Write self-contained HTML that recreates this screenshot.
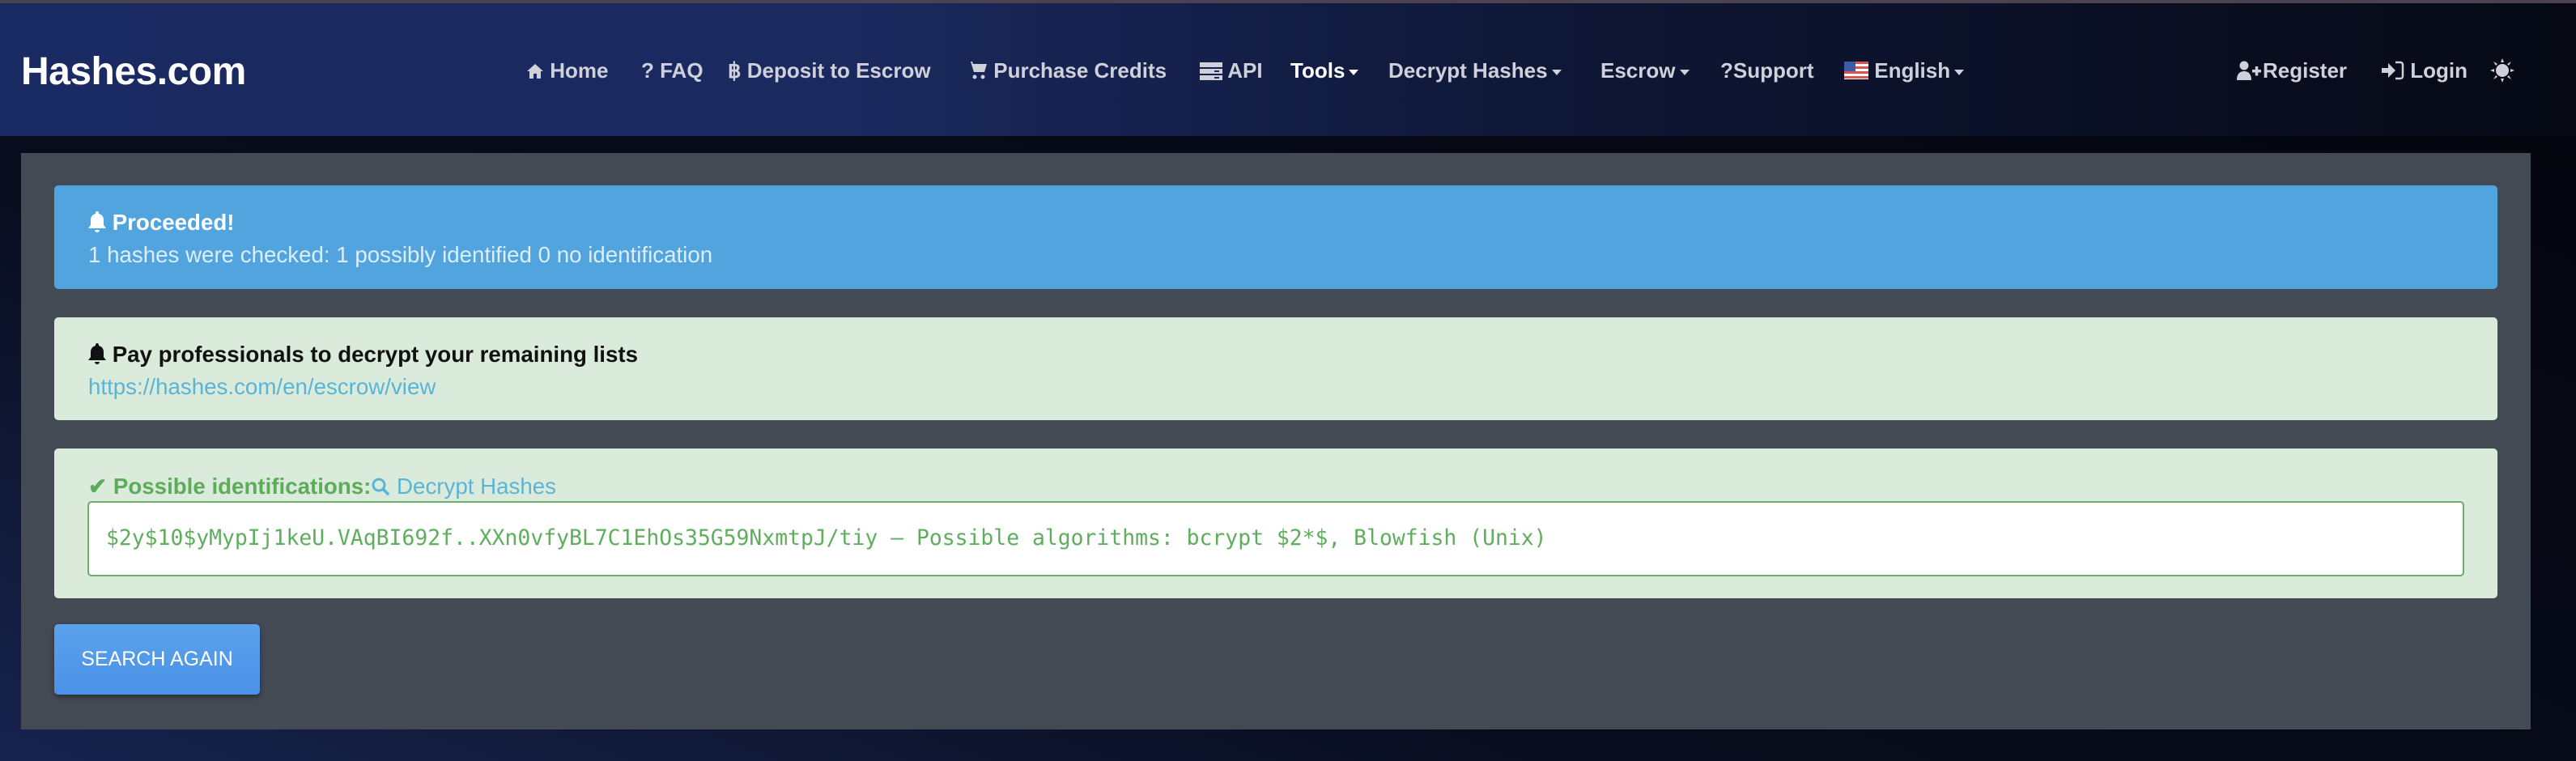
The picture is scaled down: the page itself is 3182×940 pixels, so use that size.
<!DOCTYPE html>
<html><head><meta charset="utf-8">
<style>
*{box-sizing:border-box;margin:0;padding:0}
html,body{width:3182px;height:940px;overflow:hidden}
body{font-family:"Liberation Sans",sans-serif;background:linear-gradient(20deg,#17244f 0%,#080c1c 35%,#04060d 100%);position:relative}
.strip{position:absolute;left:0;top:0;width:3182px;height:4px;background:#4b4352}
.nav{position:absolute;left:0;top:4px;width:3182px;height:164px;background:linear-gradient(90deg,#1a2a62 0%,#1a295e 33%,#0f1736 60%,#060914 100%)}
.logo{position:absolute;left:26px;top:57px;font-size:48px;font-weight:bold;color:#fff;letter-spacing:-0.5px}
.ni{position:absolute;top:68px;font-size:26px;font-weight:bold;color:#cfd0da;white-space:nowrap;line-height:30px}
.ni.w{color:#fff}
.ni svg{vertical-align:-3px;fill:#cfd0da}
.car{display:inline-block;width:0;height:0;border-left:6px solid transparent;border-right:6px solid transparent;border-top:7px solid currentColor;vertical-align:middle;margin-left:5px}
.panel{position:absolute;left:26px;top:189px;width:3100px;height:712px;background:#434a54}
.al{position:absolute;left:41px;width:3018px;border-radius:5px}
.t{position:absolute;left:42px;font-size:27.7px;white-space:nowrap}
.t svg{vertical-align:-3px}
.input{position:absolute;left:41px;top:65px;width:2936px;height:93px;background:#fff;border:2px solid #6ab068;border-radius:5px}
.mono{position:absolute;left:21px;top:28px;font-family:"DejaVu Sans Mono","Liberation Mono",monospace;font-size:26.4px;color:#5fae5d;white-space:nowrap}
.btn{position:absolute;left:41px;top:582px;width:254px;height:87px;border-radius:5px;background:linear-gradient(#5aa2ec,#4b91e8);box-shadow:0 3px 6px rgba(0,0,0,.35);color:#fff;font-size:25px;text-align:center;line-height:87px}
</style></head><body>
<div class="strip"></div>
<div class="nav">
 <div class="logo">Hashes.com</div>
 <div class="ni" style="left:650px"><svg width="22" height="22" viewBox="0 0 22 22"><path d="M11 2 L1 11 L4 11 L4 20 L9 20 L9 14 L13 14 L13 20 L18 20 L18 11 L21 11 Z"/></svg> Home</div>
 <div class="ni" style="left:792px">? FAQ</div>
 <div class="ni" style="left:899px">&#3647; Deposit to Escrow</div>
 <div class="ni" style="left:1194px"><svg width="26" height="24" viewBox="0 0 26 24"><path d="M0 1h5l4 13h13l3-10H8l-1-3z"/><circle cx="10" cy="20" r="2.5"/><circle cx="20" cy="20" r="2.5"/></svg> Purchase Credits</div>
 <div class="ni" style="left:1482px"><svg width="28" height="22" viewBox="0 0 28 22"><rect x="0" y="0" width="28" height="6"/><rect x="0" y="8" width="28" height="6"/><rect x="0" y="16" width="28" height="6"/><rect x="18" y="10" width="6" height="2" fill="#1a2a62"/><rect x="18" y="18" width="6" height="2" fill="#1a2a62"/></svg> API</div>
 <div class="ni w" style="left:1594px">Tools<span class="car"></span></div>
 <div class="ni" style="left:1715px">Decrypt Hashes<span class="car"></span></div>
 <div class="ni" style="left:1977px">Escrow<span class="car"></span></div>
 <div class="ni" style="left:2125px">?Support</div>
 <div class="ni" style="left:2278px"><span style="display:inline-block;width:30px;height:22px;vertical-align:-2px;background:repeating-linear-gradient(#d9534f 0 3px,#fff 3px 6px);position:relative"><span style="position:absolute;left:0;top:0;width:14px;height:12px;background:#3c5aa8"></span></span> English<span class="car"></span></div>
 <div class="ni" style="left:2763px"><svg width="32" height="24" viewBox="0 0 32 24"><circle cx="9" cy="6" r="5.5"/><path d="M0 24c0-8 4-11 9-11s9 3 9 11z"/><rect x="19" y="11" width="11" height="3.5"/><rect x="22.8" y="7" width="3.5" height="11.5"/></svg>Register</div>
 <div class="ni" style="left:2942px"><svg width="28" height="24" viewBox="0 0 28 24"><path d="M0 9h8V3l9 9-9 9v-6H0z"/><path d="M17 2h6a3 3 0 0 1 3 3v14a3 3 0 0 1-3 3h-6" fill="none" stroke="#cfd0da" stroke-width="2.5"/></svg> Login</div>
 <div class="ni" style="left:3076px"><svg width="30" height="30" viewBox="0 0 30 30"><circle cx="15" cy="15" r="8"/><path d="M15 0l2 5h-4zM15 30l2-5h-4zM0 15l5 2v-4zM30 15l-5 2v-4zM4 4l5 3-2 2zM26 26l-5-3 2-2zM26 4l-3 5-2-2zM4 26l3-5 2 2z"/></svg></div>
</div>
<div class="panel">
 <div class="al" style="top:40px;height:128px;background:#52a4df">
  <div class="t" style="top:30px;color:#fff;font-weight:bold"><svg width="22" height="26" viewBox="0 0 22 26" fill="#fff"><path d="M11 0a2 2 0 0 1 2 2v1c4 1 6 4 6 8v6l3 4H0l3-4v-6c0-4 2-7 6-8V2a2 2 0 0 1 2-2zM8 23h6a3 3 0 0 1-6 0z"/></svg> Proceeded!</div>
  <div class="t" style="top:70px;color:#dceefb">1 hashes were checked: 1 possibly identified 0 no identification</div>
 </div>
 <div class="al" style="top:203px;height:127px;background:#daebdb">
  <div class="t" style="top:30px;color:#111;font-weight:bold"><svg width="22" height="26" viewBox="0 0 22 26" fill="#111"><path d="M11 0a2 2 0 0 1 2 2v1c4 1 6 4 6 8v6l3 4H0l3-4v-6c0-4 2-7 6-8V2a2 2 0 0 1 2-2zM8 23h6a3 3 0 0 1-6 0z"/></svg> Pay professionals to decrypt your remaining lists</div>
  <div class="t" style="top:70px;color:#5ab4d6">https://hashes.com/en/escrow/view</div>
 </div>
 <div class="al" style="top:365px;height:185px;background:#daebdb">
  <div class="t" style="top:30px;color:#5cac5a;font-weight:bold">&#10004; Possible identifications:<span style="color:#5ab4d6;font-weight:normal"><svg width="24" height="24" viewBox="0 0 24 24"><circle cx="10" cy="10" r="7" fill="none" stroke="#5ab4d6" stroke-width="3"/><path d="M15 15l7 7" stroke="#5ab4d6" stroke-width="3.5"/></svg> Decrypt Hashes</span></div>
  <div class="input"><div class="mono">$2y$10$yMypIj1keU.VAqBI692f..XXn0vfyBL7C1EhOs35G59NxmtpJ/tiy – Possible algorithms: bcrypt $2*$, Blowfish (Unix)</div></div>
 </div>
 <div class="btn">SEARCH AGAIN</div>
</div>
</body></html>
